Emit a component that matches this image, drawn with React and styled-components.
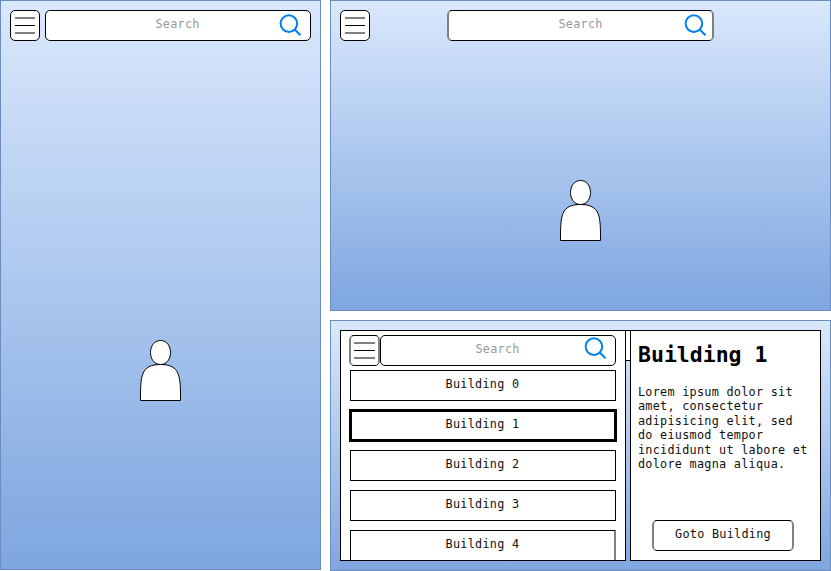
import React from "react";
import styled, { createGlobalStyle } from "styled-components";

const GlobalStyle = createGlobalStyle`
  *, *::before, *::after { box-sizing: border-box; }
  body { margin: 0; background: #fff; overflow: hidden; }
`;

const sideEdges = ({ $soft }) =>
  $soft && "border-left: 2px solid #808080; border-right: 2px solid #808080;";

const Page = styled.main`
  display: flex;
  gap: 9px;
  align-items: flex-start;
  width: 831px;
  height: 571px;
  font: 11.8px/14.4px "DejaVu Sans Mono", monospace;
  letter-spacing: 0.27px;
  color: #111;
`;

const Column = styled.div`
  display: flex;
  flex-direction: column;
  gap: 9px;
`;

const Screen = styled.section`
  display: flex;
  flex-direction: column;
  width: ${(p) => p.$width}px;
  height: ${(p) => p.$height}px;
  padding: 9px;
  border: 1px solid #6c8ebf;
  background: linear-gradient(#dae8fc, #7ea6e0);
`;

const Toolbar = styled.header`
  display: flex;
  flex: none;
  height: 31px;
  gap: ${(p) => p.$gap}px;
`;

const MenuButton = styled.button`
  display: flex;
  flex-direction: column;
  align-items: center;
  flex: none;
  width: ${(p) => (p.$soft ? 31 : 30)}px;
  height: 31px;
  padding: 6px 0 0;
  border: 1px solid #000;
  border-radius: 5px;
  background: #fff;
  ${sideEdges}
`;

const MenuLine = styled.span`
  width: ${(p) => (p.$wide ? 21 : 20)}px;
  height: ${(p) => (p.$middle ? 1 : 2)}px;
  margin-bottom: 6px;
  background: ${(p) => (p.$middle ? "#000" : "#808080")};
`;

const SearchField = styled.div`
  display: flex;
  flex: none;
  justify-content: space-between;
  width: ${(p) => p.$width}px;
  height: 31px;
  border: 1px solid #000;
  border-radius: 5px;
  background: #fff;
  ${sideEdges}
`;

const SearchLabel = styled.span`
  flex: 1;
  padding-left: ${(p) => p.$indent}px;
  padding-top: 6px;
  color: #999;
`;

const SearchIcon = styled.svg`
  flex: none;
  width: 23px;
  height: 23px;
  margin-top: ${(p) => p.$top}px;
  margin-right: ${(p) => p.$right}px;
  fill: none;
  stroke: #0080f0;
  stroke-width: 2;
`;

const PersonIcon = styled.svg`
  align-self: center;
  flex: none;
  width: 41px;
  height: 61px;
  margin-top: ${(p) => p.$top}px;
  fill: #fff;
  stroke: #000;
`;

const Panels = styled.div`
  display: flex;
  height: 231px;
`;

const Drawer = styled.aside`
  width: 286px;
  height: 231px;
  padding: 4px 8px 0;
  border: 1px solid #000;
  background: #fff;
  overflow: hidden;
`;

const BuildingList = styled.div`
  display: flex;
  flex-direction: column;
  gap: 9px;
  margin: 4px 0 0 1px;
`;

const BuildingRow = styled.div`
  flex: none;
  width: 266px;
  height: 31px;
  padding: 6px 0 0 94.6px;
  border: 1px solid #000;
  border-right: ${(p) => (p.$soft ? "2px solid #808080" : "1px solid #000")};
  background: #fff;
  white-space: pre;
  ${(p) =>
    p.$selected &&
    "width: 268px; height: 33px; margin: -1px; padding: 5px 0 0 93.6px; border: 3px solid #000;"}
`;

const ToolbarEdge = styled.div`
  width: 4px;
  height: 31px;
  border: solid #000;
  border-width: 1px 0;
  background: #fff;
`;

const Details = styled.article`
  display: flex;
  flex-direction: column;
  width: 191px;
  height: 231px;
  padding: 10px 7px 9px;
  border: 1px solid #000;
  background: #fff;
`;

const Title = styled.h1`
  margin: 0 0 17px;
  font-size: 21.5px;
  line-height: 27px;
  letter-spacing: 0;
  color: #000;
`;

const Description = styled.p`
  margin: 0;
  white-space: pre-line;
`;

const GotoButton = styled.button`
  width: 142px;
  height: 31px;
  margin: auto 0 0 14px;
  padding: 0 0 3px;
  border: 1px solid #000;
  border-radius: 5px;
  background: #fff;
  color: inherit;
  font: inherit;
  letter-spacing: inherit;
  ${sideEdges}
`;

function Menu({ soft }) {
  return (
    <MenuButton $soft={soft} aria-label="Menu">
      <MenuLine $wide={soft} />
      <MenuLine $middle $wide={soft} />
      <MenuLine $wide={soft} />
    </MenuButton>
  );
}

function Search({ width, indent, soft, iconTop = 3, iconRight = 8 }) {
  return (
    <SearchField $width={width} $soft={soft}>
      <SearchLabel $indent={indent}>Search</SearchLabel>
      <SearchIcon viewBox="0 0 23 23" $top={iconTop} $right={iconRight}>
        <circle cx="9.9" cy="9.6" r="8.3" />
        <path d="M15.5 15.2L21.4 21.2" />
      </SearchIcon>
    </SearchField>
  );
}

function Person({ top }) {
  return (
    <PersonIcon viewBox="-.5 -.5 41 61" $top={top}>
      <path d="M0 60C0 36 0 24 20 24C6.67 24 6.67 0 20 0C33.33 0 33.33 24 20 24C40 24 40 36 40 60Z" />
    </PersonIcon>
  );
}

const description = `Lorem ipsum dolor sit
amet, consectetur
adipisicing elit, sed
do eiusmod tempor
incididunt ut labore et
dolore magna aliqua.`;

export default function App() {
  return (
    <>
      <GlobalStyle />
      <Page>
        <Screen $width={321} $height={570}>
          <Toolbar $gap={5}>
            <Menu />
            <Search width={266} indent={109.4} />
          </Toolbar>
          <Person top={299} />
        </Screen>
        <Column>
          <Screen $width={501} $height={311}>
            <Toolbar $gap={77}>
              <Menu />
              <Search width={267} indent={109.4} soft iconRight={5} />
            </Toolbar>
            <Person top={139} />
          </Screen>
          <Screen $width={501} $height={251}>
            <Panels>
              <Drawer>
                <Toolbar $gap={0}>
                  <Menu soft />
                  <Search width={236} indent={94.4} iconTop={1} />
                </Toolbar>
                <BuildingList>
                  {[0, 1, 2, 3, 4].map((n) => (
                    <BuildingRow key={n} $selected={n === 1} $soft={n === 4}>
                      {`Building ${n}`}
                    </BuildingRow>
                  ))}
                </BuildingList>
              </Drawer>
              <ToolbarEdge />
              <Details>
                <Title>Building 1</Title>
                <Description>{description}</Description>
                <GotoButton $soft>Goto Building</GotoButton>
              </Details>
            </Panels>
          </Screen>
        </Column>
      </Page>
    </>
  );
}
